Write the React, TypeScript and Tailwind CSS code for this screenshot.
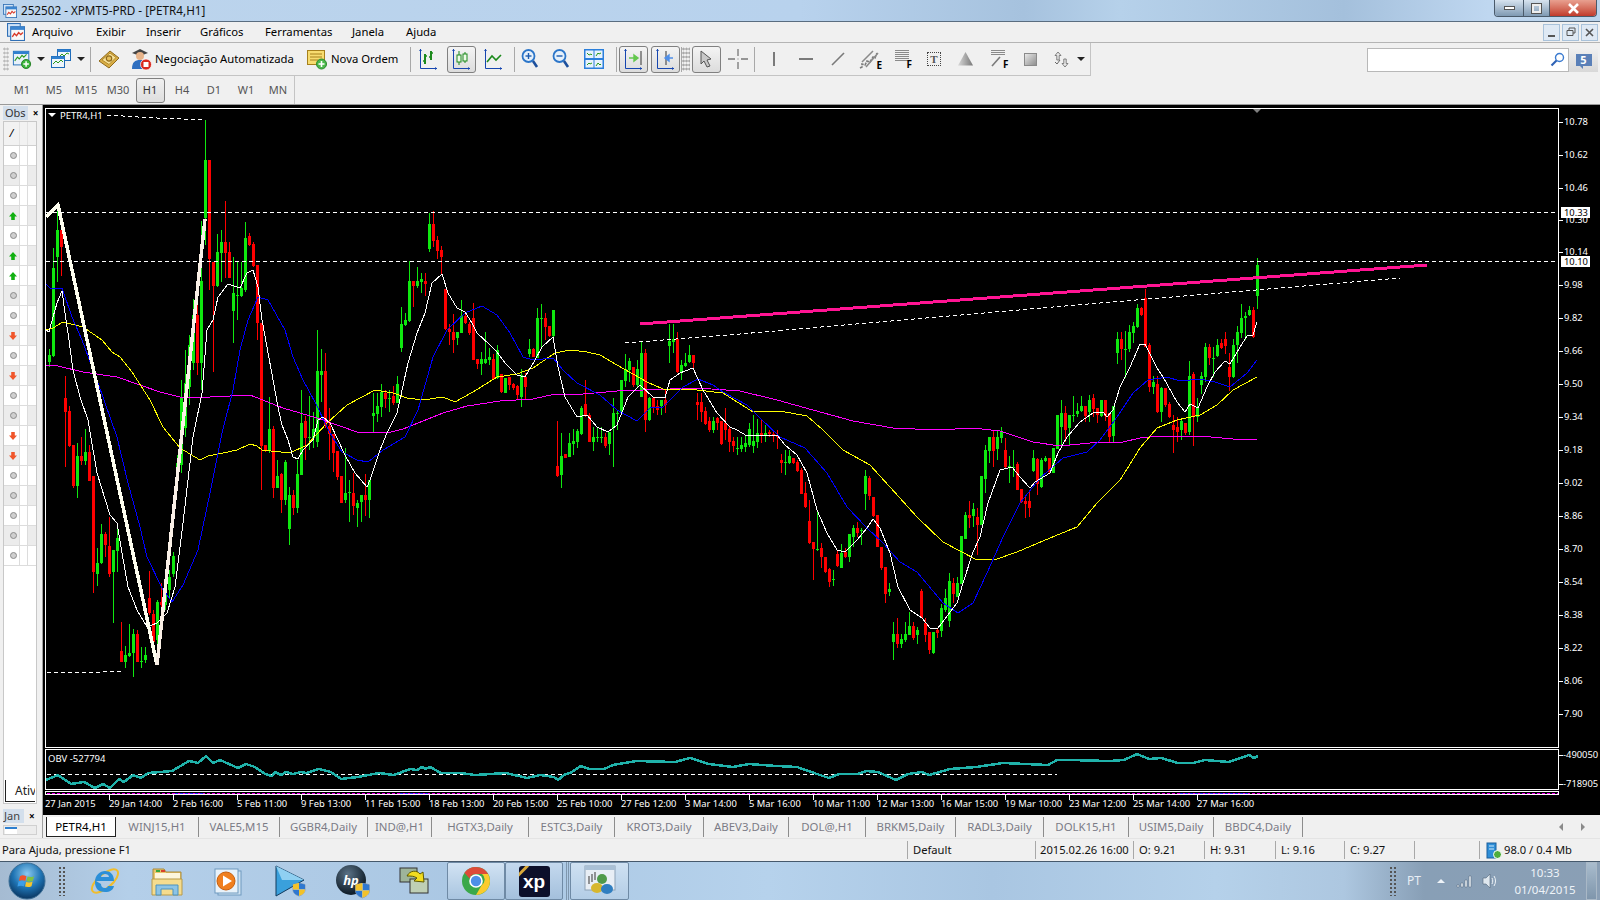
import type { ReactNode } from 'react'

// candles: [green?, bodyTop, bodyBottom, wickTop, wickBottom], 4px apart, first one at x=49.33
const candles: number[][] = [
  [1,355,362,349,367],[1,268,356,248,357],[1,230,257,207,282],[0,230,247,230,276],[0,398,412,376,467],[0,411,446,406,447],[0,445,486,445,488],[1,456,486,443,498],
  [0,456,461,437,465],[1,452,461,429,465],[0,452,481,445,481],[0,476,572,476,593],[1,563,574,548,586],[1,534,563,524,564],[0,534,545,532,557],[0,546,574,517,577],
  [1,550,572,550,623],[1,538,551,528,572],[0,651,662,622,662],[1,655,662,646,668],[1,653,656,624,657],[1,634,653,629,677],[0,634,662,630,662],[1,661,662,647,668],
  [1,655,660,647,663],[0,598,613,571,615],[0,614,642,610,642],[1,602,640,600,650],[0,602,605,583,607],[1,590,605,575,610],[1,577,590,570,598],[1,556,574,552,577],
  [1,463,475,455,480],[1,397,465,380,473],[1,383,428,350,437],[1,345,387,335,405],[1,315,363,299,370],[0,315,363,305,375],[1,281,363,221,390],[1,160,218,120,245],
  [0,160,259,160,290],[0,262,286,262,372],[1,252,286,234,287],[1,242,253,230,282],[0,242,253,201,278],[0,252,278,242,278],[1,293,311,257,343],[1,295,296,262,320],
  [1,288,296,262,297],[1,238,290,222,292],[0,236,245,233,246],[0,244,266,242,267],[0,265,323,265,340],[0,323,446,323,490],[0,445,450,445,452],[1,429,450,397,453],
  [0,429,488,426,498],[1,476,488,460,488],[0,474,500,473,513],[1,462,500,460,505],[1,495,529,487,545],[0,495,508,490,515],[1,474,508,460,513],[1,423,475,390,475],
  [0,421,438,416,460],[1,437,438,396,450],[1,429,438,412,448],[1,371,442,330,447],[1,371,375,349,402],[0,371,425,353,428],[0,426,434,408,460],[0,434,453,434,472],
  [0,451,477,451,480],[0,476,503,476,503],[1,493,500,448,503],[1,492,493,480,522],[0,493,506,473,515],[1,503,508,500,527],[1,495,502,495,522],[0,495,500,474,516],
  [1,480,500,480,518],[1,413,416,393,433],[1,406,414,393,422],[1,392,407,384,417],[0,393,399,390,408],[1,398,399,390,412],[0,396,403,386,405],[1,384,403,376,403],
  [1,324,348,307,352],[1,320,325,313,326],[1,281,321,261,322],[0,281,286,281,307],[1,281,286,267,288],[1,279,282,273,293],[0,281,284,273,296],[1,224,249,213,252],
  [0,224,241,211,247],[0,240,251,236,259],[0,250,257,246,274],[0,289,329,289,330],[0,329,332,324,345],[0,332,340,314,353],[1,332,338,332,345],[1,316,333,300,333],
  [0,316,323,312,324],[0,324,333,322,335],[0,318,360,303,360],[0,359,364,359,369],[1,359,364,352,375],[1,359,363,332,364],[1,357,360,348,365],[0,359,379,354,379],
  [1,350,378,345,379],[0,374,392,374,393],[1,378,393,378,393],[0,377,385,377,390],[0,384,388,383,390],[0,386,395,385,400],[1,375,397,369,407],[0,377,387,373,399],
  [1,349,354,339,357],[0,349,357,348,357],[1,318,358,308,358],[1,318,319,304,347],[0,318,327,313,340],[0,326,336,326,337],[1,310,336,310,337],[0,466,476,421,477],
  [1,456,475,433,488],[0,454,458,454,458],[1,443,457,433,457],[1,441,444,429,455],[1,431,442,429,448],[1,408,434,406,435],[0,404,415,380,417],[0,415,442,413,442],
  [1,437,442,427,451],[1,437,438,428,442],[1,437,438,427,443],[0,437,446,433,448],[1,432,444,432,455],[1,413,428,398,467],[1,413,414,410,430],[1,380,412,380,413],
  [1,369,381,354,387],[1,361,370,358,382],[0,367,385,367,387],[1,369,385,360,387],[1,353,397,341,397],[0,353,420,349,432],[1,398,420,397,421],[0,398,407,397,413],
  [0,406,410,400,415],[1,400,406,400,415],[0,400,405,390,413],[1,341,346,324,363],[1,339,342,324,353],[0,339,372,332,373],[1,365,372,360,380],[1,363,366,353,367],
  [1,355,362,345,363],[0,355,363,355,368],[0,402,405,393,420],[0,402,412,393,422],[0,411,424,407,425],[0,421,430,417,432],[1,421,430,417,433],[0,418,423,417,430],
  [0,421,444,421,445],[0,423,430,408,440],[0,429,442,427,452],[0,441,446,437,452],[1,448,449,437,455],[1,445,449,437,452],[1,443,447,435,452],[1,429,445,423,447],
  [1,441,446,415,453],[1,433,442,419,448],[0,433,436,420,443],[1,433,435,425,442],[0,432,434,430,437],[0,434,436,430,442],[0,435,437,430,449],[0,460,463,454,473],
  [1,462,463,450,475],[1,456,463,450,464],[0,458,463,458,464],[0,462,471,460,472],[0,470,494,468,494],[0,493,507,482,508],[0,521,543,500,544],[0,542,549,542,580],
  [1,549,550,512,551],[0,548,557,543,568],[0,557,572,557,573],[0,569,582,568,587],[1,579,580,570,586],[0,554,566,550,567],[1,553,568,544,568],[0,552,557,548,558],
  [1,534,557,534,562],[1,528,537,525,547],[0,528,533,522,537],[1,530,531,528,545],[1,476,494,470,510],[0,478,496,476,500],[0,497,516,497,517],[0,515,547,515,547],
  [0,547,568,547,570],[0,567,594,567,603],[1,589,592,583,596],[1,634,642,622,660],[0,634,644,618,648],[1,639,644,634,648],[1,634,640,622,642],[1,626,635,612,635],
  [0,626,638,622,640],[1,630,635,627,644],[0,591,618,589,618],[0,623,635,618,642],[0,632,650,632,654],[1,632,653,632,654],[0,630,633,628,638],[1,608,631,604,637],
  [1,598,610,589,612],[1,581,621,573,627],[0,583,594,578,603],[1,583,597,577,597],[1,536,584,536,584],[1,515,539,512,539],[0,515,518,501,528],[1,509,516,503,527],
  [0,517,525,508,555],[1,476,525,476,525],[1,450,479,445,493],[1,437,451,437,463],[0,437,451,430,467],[1,437,449,430,460],[1,432,438,427,443],[0,450,467,438,468],
  [1,466,468,456,483],[1,467,468,450,477],[0,464,490,462,490],[0,489,502,489,503],[0,501,504,495,518],[0,501,508,492,517],[1,458,471,450,472],[0,459,484,458,495],
  [1,460,487,458,488],[1,458,461,456,462],[0,458,472,458,473],[1,448,473,448,473],[1,415,449,415,449],[1,413,427,400,445],[0,413,430,406,442],[1,415,428,415,445],
  [1,415,416,396,422],[1,411,414,403,417],[1,406,411,396,412],[0,406,416,406,422],[1,400,412,395,422],[0,398,409,394,417],[0,408,415,408,423],[1,400,416,400,417],
  [0,400,416,400,421],[0,413,437,413,442],[1,406,436,406,442],[1,339,353,332,364],[0,339,349,332,360],[1,349,350,331,378],[1,332,349,325,352],[1,326,333,322,343],
  [1,308,327,304,328],[0,308,315,307,316],[0,298,347,289,347],[0,345,387,343,392],[1,382,387,376,394],[0,384,412,376,413],[1,388,412,387,422],[0,388,405,388,407],
  [0,404,417,402,418],[0,425,430,415,453],[0,427,432,417,442],[1,421,430,420,440],[0,423,433,423,435],[1,376,432,361,435],[0,374,417,372,446],[1,408,417,398,422],
  [1,376,385,372,394],[1,347,377,343,382],[0,347,358,344,365],[1,358,359,347,377],[1,345,356,339,357],[0,343,348,339,349],[0,339,346,332,354],[0,367,377,353,391],
  [1,345,377,339,378],[1,332,345,326,363],[1,318,333,304,338],[1,316,318,312,340],[1,310,315,306,316],[0,310,337,307,338],[1,265,296,258,309],
]

type Pt = number[]
const path = (pts: Pt[]) => pts.map((p) => p.join(',')).join(' ')

const whiteMa: Pt[] = [
  [46,330],[49,332],[53,317],[57,303],[62,291],[65,313],[69,340],[73,370],[80,397],[88,420],[97,473],[110,515],[117,523],[122,553],[128,587],[137,610],[147,627],[157,623],[167,613],[175,587],[183,523],[193,437],[202,393],[207,330],[213,320],[218,297],[228,284],[240,288],[247,273],[253,270],[258,287],[262,320],[267,347],[278,407],[282,425],[288,440],[293,457],[298,459],[303,450],[313,440],[318,420],[323,417],[330,423],[338,440],[345,455],[355,473],[367,487],[370,480],[380,450],[387,433],[397,413],[408,363],[417,333],[425,313],[432,283],[442,274],[448,293],[457,308],[465,312],[472,323],[477,333],[490,345],[497,352],[505,363],[517,375],[525,377],[535,360],[542,347],[553,337],[558,367],[565,397],[577,417],[587,415],[597,427],[608,432],[617,425],[628,397],[640,385],[653,397],[665,398],[670,380],[680,373],[693,368],[703,390],[717,413],[730,427],[737,430],[747,436],[777,435],[785,445],[797,455],[807,473],[817,510],[827,533],[837,550],[845,552],[857,540],[867,528],[873,519],[880,528],[890,553],[898,587],[910,610],[922,618],[930,628],[938,628],[957,603],[963,583],[973,552],[980,537],[988,503],[1000,470],[1012,467],[1020,477],[1030,488],[1035,482],[1050,473],[1058,453],[1067,437],[1080,422],[1093,413],[1103,412],[1107,417],[1113,410],[1120,387],[1130,367],[1140,344],[1145,344],[1157,368],[1163,377],[1177,402],[1185,412],[1190,404],[1198,408],[1207,387],[1215,372],[1225,361],[1230,364],[1240,347],[1247,336],[1253,335],[1257,322],
]
const blueMa: Pt[] = [
  [46,284],[50,288],[62,288],[72,317],[82,340],[98,383],[117,437],[128,483],[140,527],[147,557],[162,588],[172,602],[183,585],[198,550],[210,493],[222,433],[233,390],[240,350],[248,320],[258,297],[268,300],[285,330],[293,357],[303,380],[315,402],[330,433],[342,452],[357,460],[368,462],[383,450],[405,437],[418,410],[433,357],[447,330],[465,313],[482,306],[497,315],[510,333],[523,357],[533,360],[553,358],[563,370],[577,383],[600,395],[617,410],[637,421],[650,408],[663,407],[683,387],[698,379],[713,385],[723,392],[747,405],[760,418],[780,437],[805,448],[827,473],[847,507],[867,528],[883,543],[900,562],[917,572],[943,603],[958,613],[973,603],[987,573],[1003,537],[1020,503],[1040,478],[1063,458],[1087,452],[1100,440],[1117,417],[1133,393],[1148,380],[1167,377],[1180,381],[1200,379],[1215,382],[1230,387],[1247,373],[1257,360],
]
const yellowMa: Pt[] = [
  [46,330],[53,328],[63,322],[83,327],[102,340],[112,352],[120,357],[132,372],[150,400],[163,427],[180,448],[200,460],[208,456],[223,453],[237,450],[250,444],[257,446],[262,450],[290,453],[307,445],[327,423],[347,405],[375,390],[393,393],[407,398],[423,400],[443,397],[455,402],[473,392],[497,377],[517,374],[533,368],[555,353],[570,350],[587,352],[600,355],[617,365],[647,382],[663,389],[697,390],[723,393],[753,412],[780,411],[807,416],[823,430],[843,450],[870,465],[890,487],[917,517],[943,542],[977,560],[997,559],[1017,552],[1050,538],[1077,527],[1097,503],[1120,480],[1127,469],[1140,448],[1157,428],[1177,420],[1200,415],[1217,405],[1233,390],[1257,377],
]
const magentaMa: Pt[] = [
  [46,365],[58,366],[83,372],[117,377],[160,392],[180,397],[210,397],[250,395],[283,408],[317,418],[357,432],[387,433],[403,429],[443,413],[467,406],[500,401],[533,399],[555,394],[583,394],[617,391],[697,388],[740,391],[777,400],[813,410],[853,421],[893,428],[937,430],[973,428],[1000,431],[1033,442],[1060,446],[1100,442],[1123,442],[1140,438],[1160,436],[1200,436],[1233,439],[1257,439],
]
const obv: Pt[] = [
  [46,780],[58,775],[71,784],[84,782],[95,788],[103,784],[110,788],[119,779],[124,782],[133,775],[141,778],[148,773],[172,771],[189,761],[198,763],[206,756],[213,763],[220,760],[238,768],[246,764],[255,767],[265,774],[272,776],[275,772],[281,775],[286,772],[293,774],[301,772],[306,773],[319,769],[331,772],[341,779],[358,777],[379,773],[394,775],[410,769],[417,770],[422,767],[425,769],[430,767],[441,773],[461,773],[475,775],[506,773],[527,778],[540,775],[554,777],[558,780],[564,775],[572,772],[581,766],[589,769],[604,769],[613,765],[636,761],[675,762],[690,758],[709,764],[733,767],[749,764],[776,766],[797,767],[814,773],[829,778],[839,774],[858,774],[866,771],[878,772],[896,780],[908,774],[922,772],[929,775],[950,769],[976,767],[1003,763],[1048,765],[1057,760],[1070,760],[1109,761],[1124,760],[1137,754],[1149,759],[1161,758],[1178,763],[1193,763],[1205,760],[1229,762],[1249,755],[1254,758],[1258,756],
]

const prices = [
  ['10.78',122],['10.62',155],['10.46',188],['10.30',220],['10.14',252],['9.98',285],['9.82',318],['9.66',351],['9.50',384],['9.34',417],
  ['9.18',450],['9.02',483],['8.86',516],['8.70',549],['8.54',582],['8.38',615],['8.22',648],['8.06',681],['7.90',714],
] as const

const times = [
  ['27 Jan 2015',45],['29 Jan 14:00',109],['2 Feb 16:00',173],['5 Feb 11:00',237],['9 Feb 13:00',301],['11 Feb 15:00',365],['18 Feb 13:00',429],['20 Feb 15:00',493],
  ['25 Feb 10:00',557],['27 Feb 12:00',621],['3 Mar 14:00',685],['5 Mar 16:00',749],['10 Mar 11:00',813],['12 Mar 13:00',877],['16 Mar 15:00',941],['19 Mar 10:00',1005],
  ['23 Mar 12:00',1069],['25 Mar 14:00',1133],['27 Mar 16:00',1197],
] as const

// o = neutro, u = seta verde, d = seta vermelha
const watchIcons = ['o','o','o','u','o','u','u','o','o','d','o','d','o','o','d','d','o','o','o','o','o']

const tabs: [string, string][] = [
  ['WINJ15,H1','w-[83px]'],['VALE5,M15','w-[81px]'],['GGBR4,Daily','w-[88px]'],['IND@,H1','w-[64px]'],['HGTX3,Daily','w-[97px]'],['ESTC3,Daily','w-[86px]'],
  ['KROT3,Daily','w-[89px]'],['ABEV3,Daily','w-[85px]'],['DOL@,H1','w-[77px]'],['BRKM5,Daily','w-[90px]'],['RADL3,Daily','w-[88px]'],['DOLK15,H1','w-[85px]'],
  ['USIM5,Daily','w-[85px]'],['BBDC4,Daily','w-[89px]'],
]

function Slot({ className, children }: { className: string; children?: ReactNode }) {
  return <div className={`flex h-full shrink-0 items-center justify-center ${className}`}>{children}</div>
}

function Pressed({ children }: { children: ReactNode }) {
  return (
    <div className="flex h-[27px] w-[29px] items-center justify-center rounded-[3px] border border-[#808080] bg-gradient-to-b from-[#f4f4f4] to-[#dcdcdc]">
      {children}
    </div>
  )
}

const Sep = () => <div className="h-[25px] w-px shrink-0 bg-[#a8a8a8]" />
const Drop = () => <div className="h-0 w-0 border-x-[4px] border-t-[4px] border-x-transparent border-t-[#222]" />

function MtWindow({ size = 17 }: { size?: number }) {
  return (
    <svg width={size} height={size} viewBox="0 0 17 17">
      <rect x="0.5" y="0.5" width="12" height="12" fill="#cfe3f7" stroke="#2f6fb5" />
      <rect x="3.5" y="3.5" width="13" height="13" fill="#f8f8f8" stroke="#2f6fb5" />
      <rect x="3.5" y="3.5" width="13" height="3" fill="#3b85d0" />
      <path d="M5 13l2-3 2 2 2-3 2 2 2-2" fill="none" stroke="#d83a2a" strokeWidth="1.3" />
    </svg>
  )
}

function NewChartIcon() {
  return (
    <svg width="22" height="22" viewBox="0 0 22 22">
      <rect x="1.5" y="2.5" width="17" height="15" fill="#e8f1fa" stroke="#1f6bb8" />
      <rect x="1.5" y="2.5" width="17" height="3" fill="#2f80cf" />
      <path d="M3 13l3-4 2 2 3-4 2 2 3-3" fill="none" stroke="#2a9a1e" strokeWidth="1.2" />
      <circle cx="15.5" cy="16.5" r="5" fill="#3db53d" stroke="#1f7d1f" />
      <path d="M15.5 13.5v6M12.5 16.5h6" stroke="#fff" strokeWidth="1.6" />
    </svg>
  )
}

function ProfileIcon() {
  return (
    <svg width="22" height="22" viewBox="0 0 22 22">
      <rect x="7.5" y="1.5" width="13" height="11" fill="#eef5fb" stroke="#1f6bb8" />
      <rect x="7.5" y="1.5" width="13" height="2.5" fill="#2f80cf" />
      <path d="M9 9l3-3 2 2 3-3 2 1" fill="none" stroke="#2a9a1e" />
      <rect x="1.5" y="8.5" width="13" height="11" fill="#eef5fb" stroke="#1f6bb8" />
      <rect x="1.5" y="8.5" width="13" height="2.5" fill="#2f80cf" />
      <path d="M3 16l3-3 2 2 3-3 2 2" fill="none" stroke="#2a9a1e" />
    </svg>
  )
}

function GoldIcon() {
  return (
    <svg width="22" height="20" viewBox="0 0 22 20">
      <path d="M1 12L12 2l9 7-10 10z" fill="#d9ad45" stroke="#8f6a1c" />
      <path d="M4 11l8-7 6 4.5-7 7z" fill="#f7e29a" stroke="#b68d2b" />
      <circle cx="11" cy="9.5" r="2.7" fill="#e8c15c" stroke="#8f6a1c" strokeWidth="1.2" />
    </svg>
  )
}

function RobotIcon() {
  return (
    <svg width="22" height="24" viewBox="0 0 22 24">
      <path d="M2 6l8-4 8 4-8 3z" fill="#444" />
      <circle cx="10" cy="9" r="4" fill="#e8b48a" />
      <path d="M2 22c0-7 3-9 8-9s8 2 8 9z" fill="#2f6fc0" />
      <circle cx="16" cy="17.5" r="5.5" fill="#d9281e" stroke="#fff" strokeWidth="0.7" />
      <rect x="13.5" y="15" width="5" height="5" fill="#fff" />
    </svg>
  )
}

function OrderIcon() {
  return (
    <svg width="22" height="22" viewBox="0 0 22 22">
      <rect x="1.5" y="2.5" width="17" height="14" fill="#f7dc6f" stroke="#a6801c" />
      <path d="M4 6h12M4 9h12M4 12h8" stroke="#a6801c" />
      <circle cx="15.5" cy="16" r="5" fill="#4cb84c" stroke="#2b8a2b" />
      <path d="M15.5 13v6M12.5 16h6" stroke="#fff" strokeWidth="1.6" />
    </svg>
  )
}

function Axes({ children }: { children: ReactNode }) {
  return (
    <svg width="20" height="22" viewBox="0 0 20 22">
      <path d="M2.5 1v19.5H19" fill="none" stroke="#1646b0" />
      <path d="M1 3l1.5-2L4 3zM17 19l2 1.5-2 1.5z" fill="#1646b0" />
      {children}
    </svg>
  )
}

function ZoomIcon({ minus }: { minus?: boolean }) {
  return (
    <svg width="18" height="22" viewBox="0 0 18 22">
      <circle cx="7.5" cy="8" r="6" fill="#e6f1fb" stroke="#2c76c9" strokeWidth="1.8" />
      <path d="M4.5 8h6" stroke="#1c5cb0" strokeWidth="1.4" />
      {!minus && <path d="M7.5 5v6" stroke="#1c5cb0" strokeWidth="1.4" />}
      <path d="M12 13l4 6" stroke="#1c4f9c" strokeWidth="2.6" />
    </svg>
  )
}

function TileIcon() {
  return (
    <svg width="20" height="20" viewBox="0 0 20 20">
      <rect x="0" y="0" width="20" height="20" fill="#2a7fdc" />
      <rect x="1.5" y="1.5" width="8" height="7.5" fill="#e8f2fc" />
      <rect x="10.5" y="1.5" width="8" height="7.5" fill="#e8f2fc" />
      <rect x="1.5" y="11" width="8" height="7.5" fill="#e8f2fc" />
      <rect x="10.5" y="11" width="8" height="7.5" fill="#e8f2fc" />
      <path d="M3 4l2 2 2-1 1 1M12 7l2-3 1 1 2-1M3 16l2-2 1 1 2-1M12 17l2-3 2 2 1-1" fill="none" stroke="#2a9a1e" />
    </svg>
  )
}

const Glyph = ({ l }: { l: string }) => <span className="absolute bottom-[-1px] right-[-3px] text-[10px] font-bold leading-none text-black">{l}</span>

function ChannelIcon() {
  return (
    <svg width="20" height="20" viewBox="0 0 20 20">
      <path d="M1 19l2-1v-3l3 1 2-4 3 1 3-5 2 1 2-5" fill="none" stroke="#7c7c7c" strokeWidth="1.6" strokeDasharray="3 1" />
      <path d="M7 18L19 4M3 13L14 2" stroke="#8a8a8a" strokeWidth="1.5" />
    </svg>
  )
}

function WatchIcon({ kind }: { kind: string }) {
  if (kind === 'o') return <span className="block h-[7px] w-[7px] rounded-full border border-[#8c8c8c] bg-[#cfcfcf]" />
  const up = kind === 'u'
  return (
    <svg width="8" height="8" viewBox="0 0 9 9">
      <path d={up ? 'M4.5 0L9 5H6.5v4h-4V5H0z' : 'M4.5 9L9 4H6.5V0h-4v4H0z'} fill={up ? '#12b012' : '#f0552a'} />
    </svg>
  )
}

function WatchPanel() {
  return (
    <div className="flex h-full w-[43px] shrink-0 flex-col border-r border-[#a0a0a0] pb-[3px] pl-[3px] pr-[5px] pt-px">
      <div className="flex h-[14px] shrink-0 items-center">
        <span className="bg-[#d3dfec] px-[2px] text-[11px] leading-[14px] text-[#333]">Obs</span>
        <span className="ml-[5px] text-[10px] font-bold leading-none">×</span>
      </div>
      <div className="mt-[1px] flex min-h-0 flex-1 flex-col border border-[#c8c8c8] bg-white">
        <div className="flex h-[24px] shrink-0 border-b border-[#d0d0d0] bg-[#f2f2f2]">
          <div className="flex w-[16px] items-center justify-center border-r border-[#e2e2e2] text-[11px] italic">/</div>
          <div className="w-[8px] border-r border-[#e2e2e2]" />
          <div className="flex-1" />
        </div>
        {watchIcons.map((kind, i) => (
          <div key={i} className={`flex h-[20px] shrink-0 border-b border-[#dcdcdc] ${i % 2 ? 'bg-[#ececec]' : 'bg-white'}`}>
            <div className="flex w-[16px] items-center justify-end border-r border-[#dcdcdc] pr-[2px]"><WatchIcon kind={kind} /></div>
            <div className="w-[8px] border-r border-[#dcdcdc] bg-white" />
            <div className="flex-1" />
          </div>
        ))}
        <div className="flex-1" />
        <div className="ml-[1px] flex h-[22px] w-[30px] shrink-0 items-end overflow-hidden border-b border-l border-[#222] pl-[9px] text-[12px] leading-[20px] text-[#222]">Ativ</div>
        <div className="h-[1px] shrink-0" />
      </div>
      <div className="mt-[5px] flex h-[14px] shrink-0 items-center">
        <span className="w-[21px] overflow-hidden bg-[#d3dfec] pl-[1px] text-[11px] leading-[14px] text-[#444]">Jan</span>
        <span className="ml-[5px] text-[10px] font-bold leading-none">×</span>
      </div>
      <div className="mt-[2px] flex h-[10px] shrink-0 items-center border border-[#d0d0d0] bg-[#ececec] pl-[1px]">
        <span className="block h-[7px] w-[12px] border-t-2 border-[#2f80cf] bg-white" />
      </div>
    </div>
  )
}

function Chart() {
  return (
    <svg width="1557" height="710" viewBox="43 105 1557 710" className="block shrink-0 bg-black [font-family:'Noto_Sans',sans-serif]">
      <g shapeRendering="crispEdges">
        {candles.map(([up, bt, bb, wt, wb], n) => {
          const x = Math.round(49.33 + n * 4)
          const fill = up ? '#0fe80f' : '#ff0000'
          return (
            <g key={n} fill={fill}>
              <rect x={x} y={wt} width={1} height={wb - wt} />
              <rect x={x - 1} y={bt} width={3} height={Math.max(bb - bt, 1)} />
            </g>
          )
        })}
        <polyline points={path(magentaMa)} fill="none" stroke="#ff00ff" />
        <polyline points={path(yellowMa)} fill="none" stroke="#ffff00" />
        <polyline points={path(blueMa)} fill="none" stroke="#0000ff" />
        <polyline points={path(whiteMa)} fill="none" stroke="#ffffff" />

        <polyline points="46,217 58,205 157,665" fill="none" stroke="#fffff0" strokeWidth="3.5" />
        <polyline points="157,665 205,219" fill="none" stroke="#faf0e6" strokeWidth="3.5" />

        <g fill="none" stroke="#ffffff" strokeDasharray="4 3">
          <path d="M46 212.5H1558M46 261.5H1558" />
          <polyline points="107,115 138,117 157,118 205,120" />
          <polyline points="47,673 102,672 122,671" />
          <polyline points="625,343 740,334 1100,303 1400,278" />
        </g>
        <line x1="640" y1="324" x2="1427" y2="265" stroke="#ff1493" strokeWidth="3" />

        <g fill="none" stroke="#ffffff">
          <rect x="45.5" y="108.5" width="1513" height="639" />
          <rect x="45.5" y="749.5" width="1513" height="40" />
          <rect x="45.5" y="791.5" width="1513" height="3" />
        </g>
        <path d="M47 793H1558" stroke="#ff00ff" strokeDasharray="3 2" />
        <path d="M175 793h30M400 793h30M1180 793h70" stroke="#3030ff" strokeDasharray="3 2" />

        <path d="M46.5 774H1057" stroke="#ffffff" strokeDasharray="4 3" />
        <polyline points={path(obv)} fill="none" stroke="#20b2aa" strokeWidth="2.5" />

        {prices.map(([, y]) => <rect key={y} x="1559" y={y} width="4" height="1" fill="#fff" />)}
        {times.slice(1).map(([, x]) => <rect key={x} x={x} y="795" width="1" height="5" fill="#fff" />)}
        <path d="M1559 755h4M1559 784h4" stroke="#fff" />
      </g>

      <path d="M1253 109h8l-4 4z" fill="#808080" />
      <path d="M48 113h8l-4 4z" fill="#fff" />
      <text x="60" y="119" fill="#fff" className="text-[9.5px]">PETR4,H1</text>
      <text x="48" y="762" fill="#fff" className="text-[9.5px]">OBV -527794</text>

      <g fill="#fff" className="text-[9.4px]">
        {prices.map(([t, y]) => <text key={t} x="1564" y={y + 3}>{t}</text>)}
        {times.map(([t, x]) => <text key={t} x={x} y="807">{t}</text>)}
        <text x="1563" y="758">-490050</text>
        <text x="1563" y="787">-718905</text>
      </g>
      <rect x="1561" y="207" width="29" height="11" fill="#fff" />
      <rect x="1561" y="256" width="29" height="11" fill="#fff" />
      <g fill="#000" className="text-[9.4px]">
        <text x="1564" y="216">10.33</text>
        <text x="1564" y="265">10.10</text>
      </g>
    </svg>
  )
}

function WinOrb() {
  return (
    <svg width="38" height="38" viewBox="0 0 38 38">
      <defs>
        <radialGradient id="orb" cx="50%" cy="30%" r="70%">
          <stop offset="0" stopColor="#8ccbf0" />
          <stop offset="0.55" stopColor="#1f74b4" />
          <stop offset="1" stopColor="#0a3560" />
        </radialGradient>
      </defs>
      <circle cx="19" cy="19" r="18" fill="url(#orb)" stroke="#3d6f96" />
      <g transform="translate(5.5 5.5) scale(0.72)">
        <path d="M9 12c3-2 6-1 9 0l-1.5 6.5c-3-1-6-1.5-9 0z" fill="#f0542c" />
        <path d="M19.5 12.5c3 1 6 1 9-.5l-1.5 6.5c-3 1.5-6 1.5-9 .5z" fill="#7fc242" />
        <path d="M7 19.5c3-1.5 6-1 9 0L14.5 26c-3-1-6-1-9 .5z" fill="#3d9ee8" />
        <path d="M17.5 20c3 1 6 1 9-.5L25 26c-3 1.5-6 1.5-9 .5z" fill="#f7c52c" />
      </g>
    </svg>
  )
}

function TrayGrip() {
  return <div className="h-[30px] w-[8px] shrink-0 bg-[radial-gradient(#555_1px,transparent_1.2px)] bg-[length:4px_4px]" />
}

function IeIcon() {
  return (
    <svg width="34" height="34" viewBox="0 0 34 34">
      <ellipse cx="17" cy="17" rx="16" ry="7" fill="none" stroke="#f0bd2c" strokeWidth="2" transform="rotate(-40 17 17)" />
      <path d="M8 17h18c0-7-4-10-9-10S7 11 7 18s4 10 10 10c5 0 8-2 9-6h-6c-1 2-2 2-3 2-3 0-4-2-4-4h0zm5-4c0-2 2-3 4-3s4 1 4 3z" fill="#2b8fd8" fillRule="evenodd" />
    </svg>
  )
}

function FolderIcon() {
  return (
    <svg width="34" height="32" viewBox="0 0 34 32">
      <path d="M3 4h11l2 3h15v22H3z" fill="#e8c56a" stroke="#a98a3a" />
      <rect x="6" y="5" width="4" height="2" fill="#3ba63b" />
      <rect x="11" y="5" width="4" height="2" fill="#d8412c" />
      <rect x="5" y="8" width="25" height="10" fill="#fdf6dc" />
      <path d="M2 14h30v16H2z" fill="#f5dc8e" stroke="#b79a48" />
      <path d="M6 20h22v10h-5v-6H11v6H6z" fill="#8cc4e6" stroke="#4d92bd" />
    </svg>
  )
}

function MediaIcon() {
  return (
    <svg width="30" height="32" viewBox="0 0 30 32">
      <rect x="6" y="6" width="23" height="24" fill="#cfe2f2" stroke="#6f9abf" />
      <rect x="3" y="4" width="23" height="24" fill="#e8f2fa" stroke="#6f9abf" />
      <circle cx="14" cy="16" r="9" fill="#f07f1e" stroke="#c85f0c" />
      <path d="M11 10.5l9 5.5-9 5.5z" fill="#fff" />
    </svg>
  )
}

function ShieldBadge({ x, y }: { x: number; y: number }) {
  return (
    <g transform={`translate(${x} ${y})`}>
      <path d="M0 1.5L6 0l6 1.5V7c0 3-3 5-6 6-3-1-6-3-6-6z" fill="#f5f5f5" stroke="#7b8794" strokeWidth="0.6" />
      <path d="M6 0l6 1.5V6.5H6zM6 6.5v6.5c-3-1-6-3-6-6v-.5z" fill="#2f78d0" />
      <path d="M0 1.5L6 0v6.5H0zM6 6.5h6V7c0 3-3 5-6 6z" fill="#f2c22a" />
    </g>
  )
}

function TriangleApp() {
  return (
    <svg width="34" height="34" viewBox="0 0 34 34">
      <path d="M2 2l28 14L2 32z" fill="#3aa0dc" stroke="#123a5c" />
      <path d="M2 2l28 14H8z" fill="#8fd0f2" />
      <ShieldBadge x={19} y={19} />
    </svg>
  )
}

function HpIcon() {
  return (
    <div className="relative h-[32px] w-[32px] shrink-0">
      <div className="flex h-[30px] w-[30px] items-center justify-center rounded-full bg-[radial-gradient(circle_at_40%_30%,#5a7286,#12202c_70%)] text-[13px] font-bold italic leading-none text-white">hp</div>
      <svg width="16" height="16" viewBox="0 0 13 14" className="absolute bottom-[-2px] right-[-3px]"><ShieldBadge x={0} y={0} /></svg>
    </div>
  )
}

function ScanIcon() {
  return (
    <svg width="32" height="32" viewBox="0 0 32 32">
      <rect x="2" y="3" width="17" height="14" fill="#9eb49a" stroke="#333" />
      <rect x="12" y="14" width="18" height="14" fill="#bfcfb5" stroke="#333" />
      <path d="M9 11c3-6 10-6 13-2l3-2 1 10-10-1 3-3c-3-2-6-2-10-2z" fill="#f1dc1f" stroke="#5f5a00" />
    </svg>
  )
}

function ChromeIcon() {
  return (
    <svg width="30" height="30" viewBox="0 0 30 30">
      <circle cx="15" cy="15" r="14" fill="#3aa84a" />
      <path d="M15 1a14 14 0 0 1 12.1 7H15a7 7 0 0 0-6.5 4.4L3.4 6.8A14 14 0 0 1 15 1z" fill="#dd4b39" />
      <path d="M27.1 8A14 14 0 0 1 15 29l5.6-9.7A7 7 0 0 0 21 8z" fill="#fbcb2d" />
      <circle cx="15" cy="15" r="6.8" fill="#fff" />
      <circle cx="15" cy="15" r="5.2" fill="#4e8fe8" />
    </svg>
  )
}

function Mt5Icon() {
  return (
    <svg width="34" height="34" viewBox="0 0 34 34">
      <rect x="2" y="2" width="30" height="24" fill="#e8eef5" stroke="#8da2b6" />
      <rect x="2" y="2" width="30" height="4" fill="#a9c0d6" />
      <path d="M6 12v8M9 10v8M12 8v8" stroke="#555" strokeWidth="1.2" />
      <ellipse cx="19" cy="15" rx="5" ry="5" fill="#4f9a4a" />
      <ellipse cx="14" cy="24" rx="6" ry="5" fill="#d7b72e" />
      <ellipse cx="24" cy="25" rx="6" ry="5" fill="#2f7ec0" />
    </svg>
  )
}

export default function App() {
  return (
    <div className="flex h-[900px] w-[1600px] flex-col overflow-hidden bg-[#f0f0f0] text-[11.3px] text-black [font-family:'Noto_Sans',sans-serif]">
      {/* barra de titulo */}
      <div className="flex h-[22px] shrink-0 items-start justify-between border-b border-[#5a6d80] bg-[linear-gradient(90deg,#bcd4ec_0%,#b8d2ed_50%,#a6c2de_64%,#b6d1ea_70%,#a4c0dc_84%,#bfd7f0_93%,#bcd5ec_100%)]">
        <div className="flex items-center pl-[3px] pt-[1px]">
          <MtWindow size={14} />
          <span className="ml-[4px] text-[11.7px] leading-[19px] text-[#111]">252502 - XPMT5-PRD - [PETR4,H1]</span>
        </div>
        <div className="mr-[3px] flex h-[17px] overflow-hidden rounded-b-[4px] border-x border-b border-[#4a5a6a]">
          <div className="flex w-[28px] items-center justify-center bg-gradient-to-b from-[#d7e3ef] to-[#7f9ab3]">
            <span className="block h-[4px] w-[11px] border border-[#555] bg-white" />
          </div>
          <div className="flex w-[26px] items-center justify-center border-l border-[#4a5a6a] bg-gradient-to-b from-[#d7e3ef] to-[#7f9ab3]">
            <span className="block h-[9px] w-[9px] border-2 border-[#eee] outline outline-1 outline-[#555]" />
          </div>
          <div className="flex w-[47px] items-center justify-center border-l border-[#4a5a6a] bg-gradient-to-b from-[#e8a090] to-[#c0392b]">
            <svg width="13" height="11" viewBox="0 0 13 11"><path d="M2 1l9 9M11 1l-9 9" stroke="#fff" strokeWidth="2.6" /></svg>
          </div>
        </div>
      </div>

      {/* menu */}
      <div className="flex h-[21px] shrink-0 items-center border-b border-[#b4b4b4] bg-[#f0f0f0]">
        <div className="flex w-[32px] justify-center"><MtWindow size={18} /></div>
        <span className="w-[64px]">Arquivo</span>
        <span className="w-[50px]">Exibir</span>
        <span className="w-[54px]">Inserir</span>
        <span className="w-[65px]">Gráficos</span>
        <span className="w-[87px]">Ferramentas</span>
        <span className="w-[54px]">Janela</span>
        <span>Ajuda</span>
        <div className="ml-auto mr-[2px] flex gap-[2px]">
          <div className="flex h-[17px] w-[17px] items-end justify-center border border-[#a9c2da] bg-[#dfe9f4] pb-[3px]"><span className="block h-[2px] w-[7px] bg-[#555]" /></div>
          <div className="flex h-[17px] w-[17px] items-center justify-center border border-[#a9c2da] bg-[#dfe9f4]">
            <svg width="10" height="10" viewBox="0 0 10 10"><path d="M3 3V1h6v5H7M1 3.5h6v5H1z" fill="none" stroke="#555" /></svg>
          </div>
          <div className="flex h-[17px] w-[17px] items-center justify-center border border-[#a9c2da] bg-[#dfe9f4]">
            <svg width="9" height="9" viewBox="0 0 9 9"><path d="M1 1l7 7M8 1L1 8" stroke="#555" strokeWidth="1.6" /></svg>
          </div>
        </div>
      </div>

      {/* barra de ferramentas */}
      <div className="flex h-[33px] shrink-0 items-center">
        <div className="flex h-full w-[1091px] items-center border-b border-r border-[#c4c4c4] pl-[3px]">
          <div className="mr-[3px] h-[24px] w-[6px] shrink-0 bg-[radial-gradient(#bbb_1px,transparent_1.2px)] bg-[length:3px_4px]" />
          <Slot className="w-[20px]"><NewChartIcon /></Slot>
          <Slot className="w-[18px]"><Drop /></Slot>
          <Slot className="w-[22px]"><ProfileIcon /></Slot>
          <Slot className="w-[18px]"><Drop /></Slot>
          <Sep />
          <Slot className="w-[36px]"><GoldIcon /></Slot>
          <Slot className="w-[28px]"><RobotIcon /></Slot>
          <Slot className="w-[150px] justify-start!"><span className="whitespace-nowrap">Negociação Automatizada</span></Slot>
          <Slot className="w-[24px]"><OrderIcon /></Slot>
          <Slot className="w-[81px] justify-start! pl-[2px]"><span className="whitespace-nowrap">Nova Ordem</span></Slot>
          <Sep />
          <Slot className="w-[34px]">
            <Axes><path d="M7 6v10M13 3v9" stroke="#1c8a1c" strokeWidth="2" /><path d="M5 13h2M7 8h2M11 9h2M13 5h2" stroke="#1c8a1c" strokeWidth="1.5" /></Axes>
          </Slot>
          <Slot className="w-[32px]">
            <Pressed>
              <Axes><path d="M8 3v14M14 4v11" stroke="#1c8a1c" /><rect x="6" y="7" width="4" height="7" fill="#eefbe8" stroke="#1c8a1c" /><rect x="12" y="6" width="4" height="7" fill="#eefbe8" stroke="#1c8a1c" /></Axes>
            </Pressed>
          </Slot>
          <Slot className="w-[32px]">
            <Axes><path d="M4 14l5-6 4 4 5-5" fill="none" stroke="#1c8a1c" strokeWidth="1.6" /></Axes>
          </Slot>
          <div className="w-[5px] shrink-0" />
          <Sep />
          <Slot className="w-[30px]"><ZoomIcon /></Slot>
          <Slot className="w-[32px]"><ZoomIcon minus /></Slot>
          <Slot className="w-[34px]"><TileIcon /></Slot>
          <div className="w-[5px] shrink-0" />
          <Sep />
          <Slot className="w-[32px]">
            <Pressed>
              <Axes><path d="M18 3v14" stroke="#333" /><path d="M6 10h8M11 7l4 3-4 3z" fill="#63c74d" stroke="#63c74d" strokeWidth="1.4" /></Axes>
            </Pressed>
          </Slot>
          <Slot className="w-[32px]">
            <Pressed>
              <Axes><path d="M11 3v14" stroke="#333" /><path d="M14 7l-4 3 4 3zM14 10h4" fill="#4f8fe8" stroke="#4f8fe8" strokeWidth="1.4" /></Axes>
            </Pressed>
          </Slot>
          <Sep />
          <div className="h-[24px] w-[8px] shrink-0 bg-[radial-gradient(#aaa_1px,transparent_1.2px)] bg-[length:3px_4px]" />
          <Slot className="w-[32px]">
            <Pressed>
              <svg width="14" height="18" viewBox="0 0 14 18"><path d="M2 1l10 8-4 1 3 6-3 1-3-6-3 3z" fill="#c8c8c8" stroke="#555" /></svg>
            </Pressed>
          </Slot>
          <Slot className="w-[32px]">
            <svg width="20" height="20" viewBox="0 0 20 20"><path d="M10 0v7M10 13v7M0 10h7M13 10h7" stroke="#777" strokeWidth="1.3" /><rect x="9.5" y="9.5" width="1" height="1" fill="#777" /></svg>
          </Slot>
          <Sep />
          <Slot className="w-[38px]"><span className="block h-[14px] w-[2px] bg-[#7a7a7a]" /></Slot>
          <Slot className="w-[26px]"><span className="block h-[2px] w-[14px] bg-[#7a7a7a]" /></Slot>
          <Slot className="w-[38px]">
            <svg width="14" height="14" viewBox="0 0 14 14"><path d="M1 13L13 1" stroke="#7a7a7a" strokeWidth="1.6" /></svg>
          </Slot>
          <Slot className="w-[24px]">
            <div className="relative"><ChannelIcon /><Glyph l="E" /></div>
          </Slot>
          <Slot className="w-[42px]">
            <div className="relative h-[18px] w-[14px]">
              <div className="h-[11px] w-[14px] bg-[repeating-linear-gradient(0deg,#8a8a8a_0_1px,transparent_1px_2px)]" />
              <Glyph l="F" />
            </div>
          </Slot>
          <Slot className="w-[22px]">
            <div className="flex h-[14px] w-[14px] items-center justify-center border border-dotted border-[#444] text-[11px] font-bold leading-none text-[#555] [font-family:'Liberation_Serif',serif]">T</div>
          </Slot>
          <Slot className="w-[40px]">
            <svg width="15" height="14" viewBox="0 0 15 14"><defs><linearGradient id="tri"><stop offset="0" stopColor="#d8d8d8" /><stop offset="1" stopColor="#777" /></linearGradient></defs><path d="M7.5 0L15 13.5H0z" fill="url(#tri)" /></svg>
          </Slot>
          <Slot className="w-[26px]">
            <div className="relative h-[18px] w-[15px]">
              <div className="h-[5px] w-[14px] bg-[repeating-linear-gradient(0deg,#8a8a8a_0_1px,transparent_1px_2px)]" />
              <svg width="12" height="12" viewBox="0 0 12 12" className="absolute left-0 top-[5px]"><path d="M1 11L9 2" stroke="#7a7a7a" strokeWidth="1.6" /></svg>
              <Glyph l="F" />
            </div>
          </Slot>
          <Slot className="w-[38px]">
            <span className="block h-[13px] w-[13px] border border-[#8a8a8a] bg-gradient-to-br from-[#e8e8e8] to-[#909090]" />
          </Slot>
          <Slot className="w-[24px]">
            <svg width="15" height="15" viewBox="0 0 15 15"><path d="M4 0l3 3.5H5.2V8H2.8V3.5H1zM11 15l-3-3.5h1.8V7h2.4v4.5H14z" fill="#e8e8e8" stroke="#666" strokeWidth="0.8" /><path d="M1 10l2 2 3-4" fill="none" stroke="#666" /></svg>
          </Slot>
          <Slot className="w-[16px]"><Drop /></Slot>
        </div>
        <div className="ml-[276px] flex h-[24px] w-[202px] shrink-0 items-center justify-end border border-[#b8b8b8] bg-white pr-[3px]">
          <svg width="15" height="15" viewBox="0 0 15 15"><circle cx="9.5" cy="5.5" r="4" fill="#fff" stroke="#3b7bd0" strokeWidth="1.4" /><path d="M6.5 8.5L1.5 13.5" stroke="#2f62b5" strokeWidth="2.2" /></svg>
        </div>
        <div className="flex h-[24px] w-[29px] shrink-0 items-center justify-center bg-gradient-to-b from-[#f0f0f0] to-[#d8d8d8]">
          <div className="relative flex h-[12px] w-[16px] items-center justify-center bg-[#5a80b8] text-[11px] font-bold leading-none text-white">5
            <span className="absolute bottom-[-3px] left-[4px] h-0 w-0 border-l-[3px] border-t-[3px] border-l-transparent border-t-[#5a80b8]" />
          </div>
        </div>
      </div>

      {/* periodos */}
      <div className="flex h-[29px] shrink-0 border-b border-[#9a9a9a]">
        <div className="flex h-full w-[295px] items-center border-r border-[#c4c4c4] pl-[6px] text-[11px] text-[#555]">
          {['M1','M5','M15','M30','H1','H4','D1','W1','MN'].map((tf) => (
            <div key={tf} className="flex h-full w-[32px] items-center justify-center">
              {tf === 'H1'
                ? <span className="flex h-[25px] w-[29px] items-center justify-center rounded-[3px] border border-[#808080] bg-gradient-to-b from-[#f0f0f0] to-[#dedede] text-[#333]">{tf}</span>
                : tf}
            </div>
          ))}
        </div>
      </div>

      {/* area central: o painel esquerdo desce ate o fim das abas */}
      <div className="flex h-[733px] shrink-0">
        <WatchPanel />
        <div className="flex min-w-0 flex-1 flex-col">
          <Chart />
          <div className="flex h-[23px] shrink-0 items-start bg-[#f0f0f0] pl-[3px] pt-[2px]">
            <div className="flex h-[20px] w-[70px] shrink-0 items-center justify-center border-x border-b border-[#222] bg-white text-[11.5px] leading-none">PETR4,H1</div>
            {tabs.map(([name, w]) => (
              <div key={name} className={`flex h-[20px] shrink-0 items-center justify-center border-r border-[#8c8c8c] text-[11.4px] leading-none text-[#7b7b86] ${w}`}>{name}</div>
            ))}
            <div className="ml-[256px] flex h-[20px] items-center gap-[18px]">
              <span className="h-0 w-0 border-y-[4px] border-r-[4px] border-y-transparent border-r-[#8a8a8a]" />
              <span className="h-0 w-0 border-y-[4px] border-l-[4px] border-y-transparent border-l-[#8a8a8a]" />
            </div>
          </div>
        </div>
      </div>

      {/* status */}
      <div className="flex h-[23px] shrink-0 items-center border-t border-[#e4e4e4] bg-[#f0f0f0] text-[11.2px] text-[#111]">
        <div className="w-[907px] shrink-0 pl-[2px]">Para Ajuda, pressione F1</div>
        <div className="h-[18px] w-[128px] shrink-0 border-l border-[#a8a8a8] pl-[5px] leading-[18px]">Default</div>
        <div className="h-[18px] w-[98px] shrink-0 border-l border-[#a8a8a8] pl-[4px] leading-[18px] whitespace-nowrap">2015.02.26 16:00</div>
        <div className="h-[18px] w-[71px] shrink-0 border-l border-[#a8a8a8] pl-[5px] leading-[18px]">O: 9.21</div>
        <div className="h-[18px] w-[71px] shrink-0 border-l border-[#a8a8a8] pl-[5px] leading-[18px]">H: 9.31</div>
        <div className="h-[18px] w-[69px] shrink-0 border-l border-[#a8a8a8] pl-[5px] leading-[18px]">L: 9.16</div>
        <div className="h-[18px] w-[70px] shrink-0 border-l border-[#a8a8a8] pl-[5px] leading-[18px]">C: 9.27</div>
        <div className="h-[18px] w-[65px] shrink-0 border-l border-[#a8a8a8]" />
        <div className="flex h-[18px] flex-1 items-center border-l border-[#a8a8a8] pl-[5px] leading-[18px]">
          <svg width="17" height="17" viewBox="0 0 17 17" className="mr-[2px] shrink-0">
            <rect x="2" y="1" width="9" height="15" fill="#2f8fd8" stroke="#1b5f9c" />
            <path d="M4 4h5M4 7h5" stroke="#cfe8fa" />
            <circle cx="12.5" cy="12.5" r="4" fill="#4fae3c" stroke="#fff" />
          </svg>
          <span className="whitespace-nowrap">98.0 / 0.4 Mb</span>
        </div>
      </div>

      {/* barra de tarefas */}
      <div className="flex h-[39px] shrink-0 items-center border-t border-[#46596c] bg-[linear-gradient(90deg,#a5bbd2_0%,#b4cfe9_8%,#aac7e3_30%,#b6d2ec_48%,#a9c6e2_62%,#b5d1ea_76%,#adc7e0_84%,#889fb6_89%,#8a9fb5_100%)]">
        <Slot className="ml-[8px] w-[38px]"><WinOrb /></Slot>
        <div className="ml-[12px]"><TrayGrip /></div>
        <Slot className="ml-[22px] w-[34px]"><IeIcon /></Slot>
        <Slot className="ml-[28px] w-[34px]"><FolderIcon /></Slot>
        <Slot className="ml-[28px] w-[30px]"><MediaIcon /></Slot>
        <Slot className="ml-[32px] w-[34px]"><TriangleApp /></Slot>
        <Slot className="ml-[28px] w-[32px]"><HpIcon /></Slot>
        <Slot className="ml-[30px] w-[32px]"><ScanIcon /></Slot>
        <div className="ml-[17px] flex h-[38px] w-[58px] shrink-0 items-center justify-center rounded-[2px] border border-[#6f8aa5] bg-gradient-to-b from-[#d2e3f3] to-[#a9c5e0]"><ChromeIcon /></div>
        <div className="flex h-[38px] w-[58px] shrink-0 items-center justify-center rounded-[2px] border border-[#6f8aa5] bg-gradient-to-b from-[#c4d9ee] to-[#a4c0dc]">
          <span className="relative flex h-[31px] w-[31px] items-center justify-center overflow-hidden rounded-[3px] bg-[#0c0f2a] text-[19px] font-bold leading-none text-white [font-family:'Liberation_Sans',sans-serif]">
            <span className="absolute left-[-3px] top-[3px] h-[3px] w-[14px] -rotate-45 bg-[#d9a93a]" />
            xp
          </span>
        </div>
        <div className="ml-[3px] h-[38px] w-[3px] shrink-0 border-x border-[#7f97ae]" />
        <div className="ml-[1px] flex h-[38px] w-[59px] shrink-0 items-center justify-center rounded-[2px] border border-[#6f8aa5] bg-gradient-to-b from-[#cfe1f2] to-[#b3cde6]"><Mt5Icon /></div>
        <div className="ml-auto"><TrayGrip /></div>
        <span className="ml-[10px] w-[24px] text-[12px] text-[#e8eef5]">PT</span>
        <div className="ml-[6px] h-0 w-0 border-x-[4px] border-b-[4px] border-x-transparent border-b-[#eef3f8]" />
        <svg width="16" height="14" viewBox="0 0 16 14" className="ml-[11px]"><path d="M1 11h2v2H1zM5 9h2v4H5zM9 6h2v7H9zM13 2h2v11h-2z" fill="#eef3f8" stroke="#52677b" strokeWidth="0.5" /></svg>
        <svg width="16" height="16" viewBox="0 0 16 16" className="ml-[10px]"><path d="M1 5h3l4-4v14l-4-4H1z" fill="#dfe7ee" stroke="#52677b" strokeWidth="0.6" /><path d="M10 5c1 2 1 4 0 6M12 3c2 3 2 7 0 10" fill="none" stroke="#eef3f8" /></svg>
        <div className="ml-[6px] flex w-[82px] shrink-0 flex-col items-center text-[11.5px] leading-[17px] text-[#eef3f8]">
          <span>10:33</span>
          <span>01/04/2015</span>
        </div>
        <div className="mr-[3px] h-[38px] w-[11px] shrink-0 border border-[#a9b8c6] bg-gradient-to-b from-[#a9bccd] to-[#7f96ac]" />
      </div>
    </div>
  )
}
